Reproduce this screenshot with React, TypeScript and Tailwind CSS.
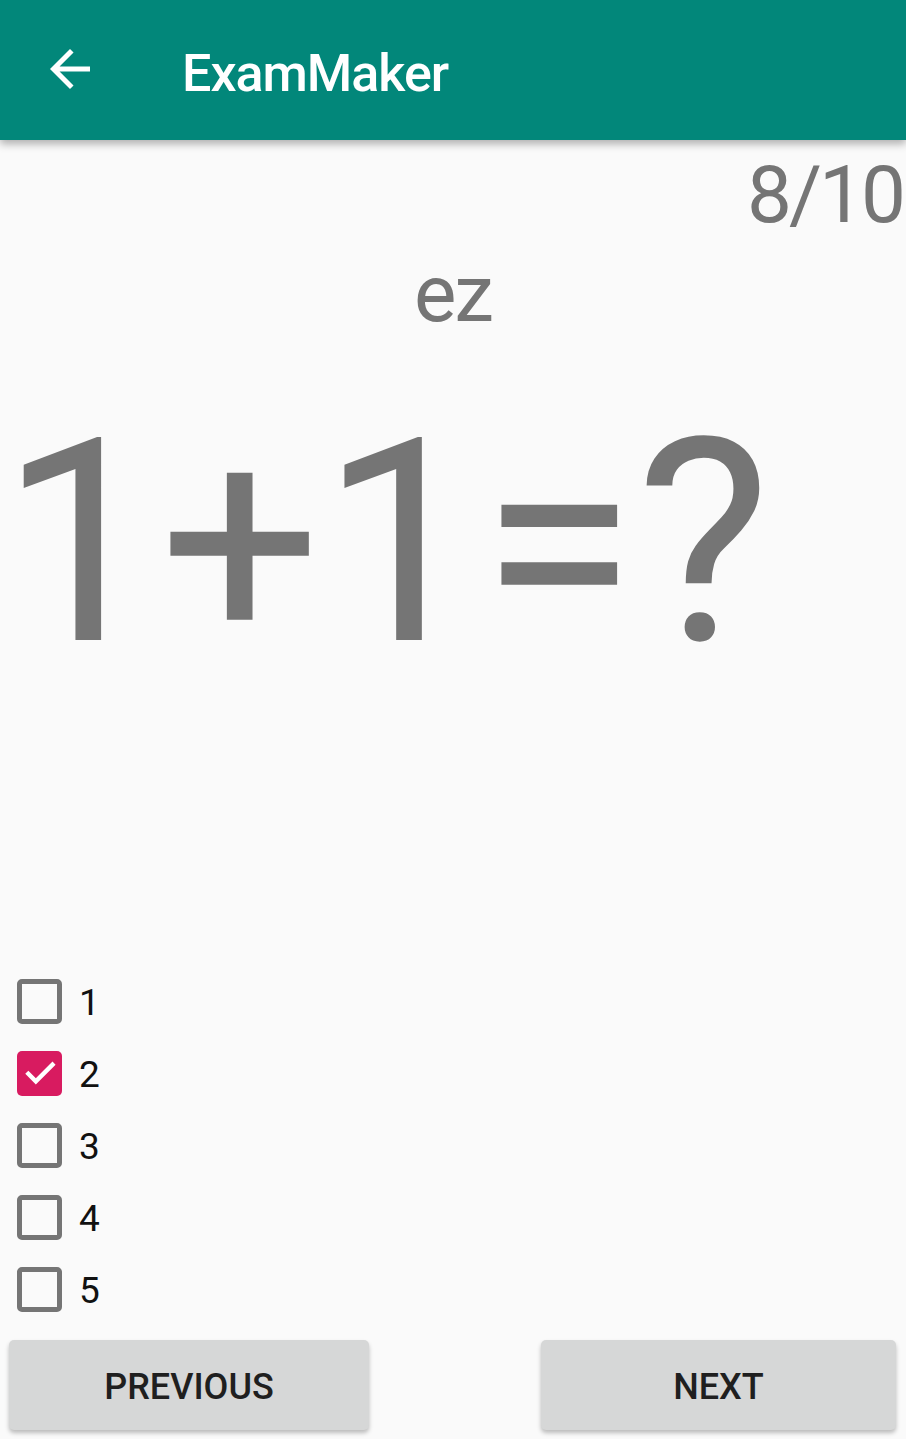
const options = [
  { label: "1", checked: false },
  { label: "2", checked: true },
  { label: "3", checked: false },
  { label: "4", checked: false },
  { label: "5", checked: false },
];

function BackArrow() {
  return (
    <svg viewBox="0 0 24 24" className="h-[60px] w-[60px]" fill="#ffffff">
      <path d="M20 11H7.83l5.59-5.59L12 4l-8 8 8 8 1.41-1.41L7.83 13H20v-2z" />
    </svg>
  );
}

function Checkbox({ checked }: { checked: boolean }) {
  if (checked) {
    return (
      <span className="flex h-[45px] w-[45px] items-center justify-center rounded-[5px] bg-[#d81b60]">
        <svg viewBox="0 0 24 24" className="h-[40px] w-[40px]" fill="none" stroke="#ffffff" strokeWidth={2.6} strokeLinecap="square">
          <path d="M5 12.5l4.5 4.5L19.5 7" />
        </svg>
      </span>
    );
  }
  return <span className="block h-[45px] w-[45px] rounded-[5px] border-[5px] border-[#757575]" />;
}

function NavButton({ label, className }: { label: string; className: string }) {
  return (
    <button
      className={`flex h-[90px] items-center justify-center rounded-[5px] bg-[#d6d7d7] pt-[4px] text-[36px] font-medium leading-none text-[#1f1f1f] shadow-[0_3px_4px_rgba(0,0,0,0.25)] ${className}`}
    >
      {label}
    </button>
  );
}

export default function App() {
  return (
    <div className="flex min-h-[1439px] w-[906px] flex-col bg-[#fafafa] font-['Roboto',sans-serif]">
      <header className="relative z-10 flex h-[140px] items-center bg-[#02877a] shadow-[0_4px_8px_rgba(0,0,0,0.3)]">
        <span className="ml-[40px] -mt-[3px]">
          <BackArrow />
        </span>
        <h1 className="ml-[82px] mt-[8px] text-[52px] font-medium leading-none tracking-[-1px] text-white">ExamMaker</h1>
      </header>

      <div className="mt-[15px] pr-[3px] text-right text-[80px] leading-none tracking-[-3px] text-[#757575]">8/10</div>
      <div className="mt-[19px] text-center text-[80px] leading-none tracking-[-2px] text-[#757575]">ez</div>
      <div className="mt-[67px] text-[284px] leading-none text-[#757575]">1+1=?</div>

      <div className="mt-auto flex flex-col">
        {options.map((option) => (
          <label key={option.label} className="flex h-[72px] items-center pl-[17px]">
            <Checkbox checked={option.checked} />
            <span className="ml-[17px] mt-[3px] text-[37px] leading-none text-[#111111]">{option.label}</span>
          </label>
        ))}
      </div>

      <div className="mb-[9px] mt-[15px] flex justify-between pl-[9px] pr-[10px]">
        <NavButton label="PREVIOUS" className="w-[360px]" />
        <NavButton label="NEXT" className="w-[355px]" />
      </div>
    </div>
  );
}
